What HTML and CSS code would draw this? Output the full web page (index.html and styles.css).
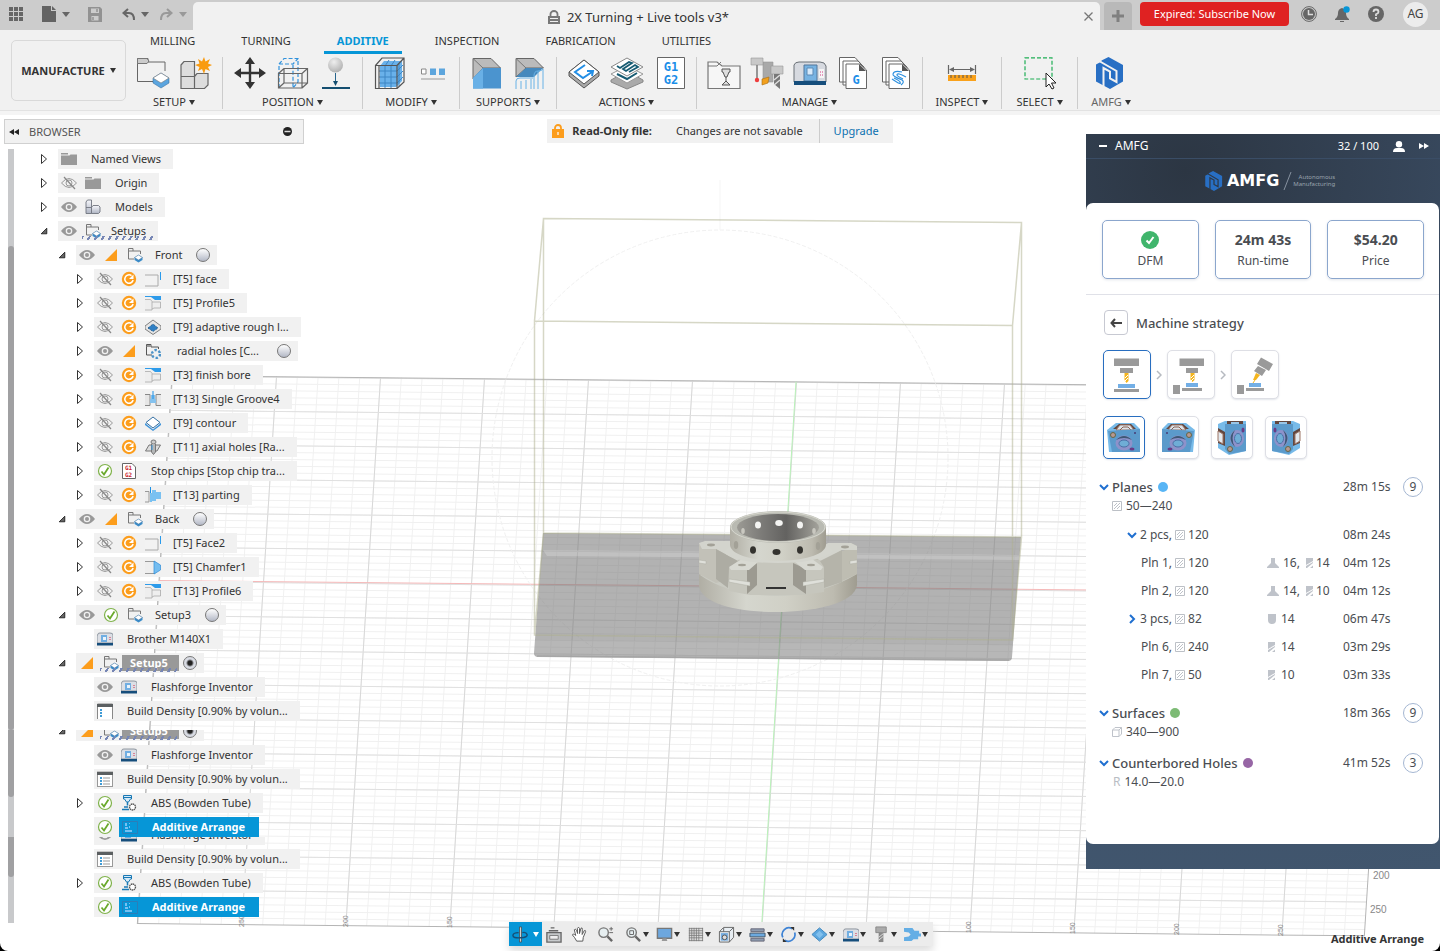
FILE: index.html
```html
<!DOCTYPE html>
<html lang="en">
<head>
<meta charset="utf-8">
<meta name="viewport" content="width=device-width, initial-scale=1">
<title>2X Turning + Live tools v3*</title>
<link rel="stylesheet" href="styles.css">
</head>
<body>
<svg class="defs" width="0" height="0" aria-hidden="true">
<defs>
<linearGradient id="gSteel" x1="0" y1="0" x2="0" y2="1"><stop offset="0" stop-color="#f6f7fb"/><stop offset="1" stop-color="#aeb4c3"/></linearGradient>
<radialGradient id="gBall" cx=".4" cy=".3" r=".8"><stop offset="0" stop-color="#eee"/><stop offset="1" stop-color="#aaa"/></radialGradient>
<linearGradient id="gSide"><stop offset="0" stop-color="#b0aea4"/><stop offset=".3" stop-color="#d5d6ce"/><stop offset=".55" stop-color="#d0d0c6"/><stop offset=".85" stop-color="#bdbbb0"/><stop offset="1" stop-color="#9f9c90"/></linearGradient>
<linearGradient id="gHole"><stop offset="0" stop-color="#9c9b95"/><stop offset=".3" stop-color="#7c7b78"/><stop offset=".6" stop-color="#636260"/><stop offset="1" stop-color="#a3a29b"/></linearGradient>
</defs>
<symbol id="closed" viewBox="0 0 8 12"><path d="M1.5 1.5 6.500 6 1.500 10.500Z" fill="#fff" stroke="#333"/></symbol>
<symbol id="open" viewBox="0 0 10 10"><path d="M8.500 1.500V8.500H1.500Z" fill="#666" stroke="#111"/></symbol>
<symbol id="eye" viewBox="0 0 16 16"><path d="M0 8Q8-2 16 8 8 18 0 8Z" fill="#999"/><circle cx="8" cy="8" r="3.300" fill="#f1f1f1"/><circle cx="8" cy="8" r="2" fill="#999"/></symbol>
<symbol id="eyeoff" viewBox="0 0 16 16"><path d="M.5 8Q8-1 15.500 8 8 17 .5 8Z" fill="none" stroke="#999"/><circle cx="8" cy="8" r="3" fill="none" stroke="#999"/><path d="M3 2 14 14" stroke="#888" stroke-width="1.200"/></symbol>
<symbol id="folder" viewBox="0 0 16 16"><path d="M0 2H7V3.500H0ZM0 4.500H8.500L9.500 3.500H16V14H0Z" fill="#999"/></symbol>
<symbol id="models" viewBox="0 0 16 16"><path d="M1 3 2.500 1H6.500V14.500H1Z" fill="url(#gSteel)" stroke="#70757f" stroke-width=".9"/><path d="M6.500 8.500 8 6.500H13.500L15 8V13L13.500 14.500H6.500ZM1 8.500H6.500" fill="url(#gSteel)" stroke="#70757f" stroke-width=".9"/></symbol>
<symbol id="setup" viewBox="0 0 16 16"><path d="M7 12H1.500V1.500H6V4H13.500V7" fill="none" stroke="#777"/><path d="M1.500 4H6" stroke="#777"/><path d="M7.500 10.500 11.500 8 15.500 10.500V13L11.500 15.500 7.500 13Z" fill="#3b8cc9"/><path d="M7.500 10.500 11.500 8 15.500 10.500 11.500 13Z" fill="#fff" stroke="#3e6f99" stroke-width=".5"/></symbol>
<symbol id="pattern" viewBox="0 0 16 16"><path d="M7 12H1.500V1.500H6V4H13.500V6" fill="none" stroke="#555"/><path d="M1.500 4H6V2H2Z" fill="#999"/><circle cx="11" cy="11" r="4" fill="none" stroke="#4b92c8" stroke-width="2.400" stroke-dasharray="2.400 1.800"/></symbol>
<symbol id="warn" viewBox="0 0 16 16"><path d="M14 2V14H2Z" fill="#fc9d1c"/></symbol>
<symbol id="regen" viewBox="0 0 16 16"><circle cx="8" cy="8" r="7.200" fill="#fc9d1c"/><path d="M10.500 4.700A4.200 4.200 0 1 0 12.100 9" fill="none" stroke="#fff" stroke-width="1.500"/><path d="M8 8H12.500V3.500Z" fill="#fff"/></symbol>
<symbol id="ok" viewBox="0 0 16 16"><circle cx="8" cy="8" r="6.500" fill="#fff" stroke="#7fb24a" stroke-width="1.200"/><path d="M4.500 8.500 7 11.500 11.500 4.500" fill="none" stroke="#6aaa2c" stroke-width="1.800"/></symbol>
<symbol id="face" viewBox="0 0 16 16"><path d="M0 4H13V15H0" fill="#f2f2f2" stroke="#aaa"/><path d="M15.500 1V9" stroke="#2a9bec"/></symbol>
<symbol id="profile" viewBox="0 0 16 16"><path d="M0 1H16V5H10L6 2H0Z" fill="#2e9bea"/><path d="M0 4.500H5.500L7 6.500V15H0M7 7H15.500V13H9L7 14" fill="#eee" stroke="#aaa" stroke-width=".8"/></symbol>
<symbol id="chamfer" viewBox="0 0 16 16"><path d="M0 2.500H10V14.500H0" fill="#eee" stroke="#999"/><path d="M9 2 15.500 6V11L9 15Z" fill="#74bdf0" stroke="#2e8dd8" stroke-width=".7"/></symbol>
<symbol id="adapt" viewBox="0 0 16 16"><path d="M0 7 8 1 16 7V10L8 15.500 0 10Z" fill="#e5e5e5" stroke="#666" stroke-width=".8"/><path d="M3 9 8 5 13 9 8 12.500Z" fill="#2f7fc4" stroke="#1c4e7c" stroke-dasharray="1 1"/></symbol>
<symbol id="groove" viewBox="0 0 16 16"><path d="M0 3.500H5V14.500H0M16 3.500H11V14.500H16" fill="#e6e6e6" stroke="#888"/><path d="M6 4V8H5V12H11V8H10V4Z" fill="#85c2ee"/><path d="M8 0V8" stroke="#1d90e6"/></symbol>
<symbol id="contour" viewBox="0 0 16 16"><path d="M0 8 8 14.500 16 8V10L8 16 0 10Z" fill="#3d93da"/><path d="M1 7.500 8 2 15 7.500 8 13Z" fill="#fff" stroke="#3470a4"/></symbol>
<symbol id="drill" viewBox="0 0 16 16"><path d="M.5 12 4 6H15.500L12 12Z" fill="#ddd" stroke="#777"/><ellipse cx="8.500" cy="3" rx="2.500" ry="2" fill="#ccc" stroke="#777"/><path d="M6.500 5V13L8.500 15.500 10.500 13V5" fill="#b5b7b8" stroke="#777"/><path d="M7 11V6" stroke="#3a99df"/></symbol>
<symbol id="parting" viewBox="0 0 16 16"><path d="M0 4.500H4V15H0" fill="#eee" stroke="#999"/><path d="M5.500 0V6" stroke="#1d90e6"/><path d="M5 6H7V3H11V5H16V12H11V14H7V15H5Z" fill="#7ac1f1"/></symbol>
<symbol id="machine" viewBox="0 0 16 16"><path d="M1 3Q1 2 3 2H13Q16 2 16 4V12H0V5Z" fill="#dcdfe5" stroke="#687280" stroke-width=".7"/><path d="M4 4H10V11H4Z" fill="#70aee2"/><path d="M6 6H9V9H6Z" fill="#eaf3fb"/><path d="M0 12H16V14.500H0Z" fill="#164e7c"/><path d="M13 6V10" stroke="#d7264a" stroke-dasharray="1 1"/></symbol>
<symbol id="density" viewBox="0 0 16 16"><rect x=".5" y="1" width="15" height="14.500" fill="#fff" stroke="#999"/><path d="M0 1H16V4H0Z" fill="#5b5f61"/><path d="M3 7H5M3 10H5M3 13H5" stroke="#007bc8" stroke-width="1.500"/><path d="M6 7H13M6 10H13M6 13H13" stroke="#999"/></symbol>
<symbol id="density2" viewBox="0 0 16 16"><path d="M.5 16V1H15.500V16" fill="#fff" stroke="#888"/><path d="M0 1H16V4H0Z" fill="#5b5f61"/><path d="M3 7H5M3 10H5M3 13H5" stroke="#007bc8" stroke-width="1.500"/></symbol>
<symbol id="filament" viewBox="0 0 16 16"><path d="M2.500 .5H10.500V4H9.500L7.500 7H5.500L3.500 4H2.500Z" fill="#d6ebf8" stroke="#1878b5"/><path d="M3 2.500H10" stroke="#1878b5"/><path d="M6.500 7V10.500M3 12H7M1 14.500H8" fill="none" stroke="#1878b5" stroke-width="1.500"/><circle cx="11.500" cy="12" r="3" fill="#fff" stroke="#555" stroke-width="1.300" stroke-dasharray="1.500 .5"/></symbol>
<symbol id="arrange" viewBox="0 0 16 16"><path d="M.5 2.500H15.500V14.500H.5Z" fill="none" stroke="#2b7db8"/><path d="M3 4H5V7H3ZM3 8H6V10H3ZM3 11H10V13H3ZM7 4H8V5H7ZM7 7H8V9H7Z" fill="#75c1f2"/></symbol>
<symbol id="logo" viewBox="0 0 28 32"><path d="M12.500 0 27 8V24.500L14 32 0 24.500V7.500L5.500 4.500V3.500Z" fill="#286fc4"/><path d="M4 4.500 20.500 14V25L14 21.500V14.500L7.500 11V29" fill="none" stroke="var(--gap, #f1f1f1)" stroke-width="2"/></symbol>
<symbol id="hatch" viewBox="0 0 10 10"><path d="M.5.5H9.500V9.500H.5Z" fill="none" stroke="#bcc0c6"/><path d="M2 5 5 2M2 8 8 2M5 8 8 5" stroke="#b5bac2" stroke-width=".9"/></symbol>
<symbol id="mill" viewBox="0 0 12 10"><path d="M4 0H8V5L12 9V10H0V9L4 5Z" fill="#bfc3ca"/></symbol>
<symbol id="endmill" viewBox="0 0 8 10"><path d="M0 0H7V3L0 7ZM0 8 7 4V5L1 10H0ZM4 10 7 7.500V10Z" fill="#bfc3ca"/></symbol>
<symbol id="ball" viewBox="0 0 8 10"><path d="M0 0H8V6A4 4 0 0 1 0 6Z" fill="#bfc3ca"/></symbol>
<symbol id="down" viewBox="0 0 10 10"><path d="M1 3 5 7 9 3" fill="none" stroke="#1f6fd0" stroke-width="2"/></symbol>
<symbol id="right" viewBox="0 0 10 10"><path d="M3 1 7 5 3 9" fill="none" stroke="#1f6fd0" stroke-width="2"/></symbol>
<symbol id="block" viewBox="0 0 34 30"><path d="M0 7 9 0H27L33 6V29H2Z" fill="#78bbe9"/><path d="M6 6 12 1H24L29 6Z" fill="#62473f"/><path d="M9 7 13 2H23L27 7Z" fill="#dce4ea" stroke="#9c7465"/><path d="M13 7 16 4H21L24 7" fill="none" stroke="#8a6252"/><path d="M1 8 33 6V29H5Z" fill="#5b9acb"/><ellipse cx="17" cy="20" rx="8.500" ry="7.500" fill="#8d92ca"/><path d="M9 17Q17 9 25 17 17 13 9 17" fill="#3e5876"/><ellipse cx="17" cy="20.500" rx="5" ry="3.500" fill="#6fadd6" stroke="#4b70a6"/><circle cx="6" cy="12" r="2.500" fill="#b89890" stroke="#664"/><ellipse cx="25" cy="26" rx="2.500" ry="1.500" fill="#6a3a86"/><circle cx="28" cy="10" r="1" fill="#463c75"/></symbol>
<symbol id="blockside" viewBox="0 0 30 34"><path d="M1 3 8 0H29V30L12 34 1 27Z" fill="#78bbe9"/><path d="M10 0H26V4H10Z" fill="#62473f"/><path d="M14 1H22V4H14Z" fill="#9ac6e6"/><path d="M1 7 8 11V25L1 22Z" fill="#62473f"/><path d="M1 10 6 13V23L1 20Z" fill="#e4e9ee" stroke="#9c7465"/><path d="M8 3H29V30L12 33 8 28Z" fill="#5b9acb"/><ellipse cx="20" cy="17.500" rx="7" ry="8.500" fill="#8d92ca"/><path d="M18 9Q9 17 18 26 13 17 18 9" fill="#3e5876"/><ellipse cx="21" cy="17.500" rx="3.500" ry="5" fill="#6fadd6" stroke="#4b70a6"/><circle cx="13" cy="28" r="2.500" fill="#b89890" stroke="#664"/><ellipse cx="26" cy="9" rx="1.500" ry="2.500" fill="#6a3a86"/></symbol>
</svg>

<header>
<div class="titlebar">
<div class="quick">
<button class="ib" aria-label="Data panel"><svg width="14" height="14" viewBox="0 0 14 14"><path d="M0 0H4V4H0ZM5 0H9V4H5ZM10 0H14V4H10ZM0 5H4V9H0ZM5 5H9V9H5ZM10 5H14V9H10ZM0 10H4V14H0ZM5 10H9V14H5ZM10 10H14V14H10Z" fill="#666"/></svg></button>
<button class="ib new" aria-label="New file"><svg width="14" height="16" viewBox="0 0 14 16"><path d="M0 0H9V5H14V16H0ZM10 0 14 4H10Z" fill="#636363"/></svg><i class="car"></i></button>
<button class="ib save" aria-label="Save"><svg width="14" height="15" viewBox="0 0 14 15"><path d="M0 0H12L14 2V15H0Z" fill="#929292"/><path d="M3 1.500H11V6H3ZM3.500 9H10.500V13.500H3.500Z" fill="#ccc"/><path d="M9 2V5M5 10V13" stroke="#929292" stroke-width="1.500"/></svg></button>
<button class="ib undo" aria-label="Undo"><svg width="13" height="13" viewBox="0 0 13 13"><path d="M6 1 1.500 5 6 9M2 5H7Q12 5 12 12" fill="none" stroke="#666" stroke-width="2"/></svg><i class="car"></i></button>
<button class="ib dim" aria-label="Redo"><svg width="13" height="13" viewBox="0 0 13 13"><path d="M7 1 11.500 5 7 9M11 5H6Q1 5 1 12" fill="none" stroke="#999" stroke-width="2"/></svg><i class="car"></i></button>
</div>
<div class="doc"><span class="doc-name"><svg width="12" height="14" viewBox="0 0 12 14"><path d="M2.500 7V4A3.500 3 0 0 1 9.500 4V7" fill="none" stroke="#777" stroke-width="1.800"/><path d="M0 6H12V14H0Z" fill="#777"/><path d="M2 8.500H10M2 11.500H10" stroke="#eee"/></svg>2X Turning + Live tools v3*</span>
<button class="ib" aria-label="Close"><svg width="9" height="9" viewBox="0 0 9 9"><path d="M.5.5 8.500 8.500M8.500.5.5 8.500" stroke="#777" stroke-width="1.300"/></svg></button></div>
<button class="plus" aria-label="New tab"><svg width="12" height="12" viewBox="0 0 12 12"><path d="M6 0V12M0 6H12" stroke="#808080" stroke-width="3"/></svg></button>
<button class="subscribe">Expired: Subscribe Now</button>
<div class="status">
<button class="ib" aria-label="Job status"><svg width="16" height="16" viewBox="0 0 16 16"><circle cx="8" cy="8" r="7.400" fill="none" stroke="#666"/><circle cx="8" cy="8" r="6" fill="#666"/><path d="M7.500 4V8.500H12" fill="none" stroke="#ddd" stroke-width="1.500"/></svg></button>
<button class="ib" aria-label="Notifications"><svg width="15" height="17" viewBox="0 0 15 17"><path d="M0 13Q3 11 3 7 3 3 7 2 11 3 11 7 11 11 14 13V14H0Z" fill="#666"/><path d="M5 15H9V16H5Z" fill="#666"/><circle cx="11.500" cy="3.500" r="3.200" fill="#0696d7"/></svg></button>
<button class="ib" aria-label="Help"><svg width="16" height="16" viewBox="0 0 16 16"><circle cx="8" cy="8" r="8" fill="#666"/><path d="M5.500 6Q5.500 3.500 8 3.500T10.500 6Q10.500 7.200 8 8.300V10M8 11V13" fill="none" stroke="#ddd" stroke-width="1.800"/></svg></button>
<button class="avatar">AG</button>
</div>
</div>
<div class="ribbon">
<button class="workspace">MANUFACTURE<i class="car"></i></button>
<div class="ribbon-main">
<nav class="tabs"><button>MILLING</button><button>TURNING</button><button class="on">ADDITIVE</button><button>INSPECTION</button><button>FABRICATION</button><button>UTILITIES</button></nav>
<div class="groups">
<section class="g96"><div class="tools">
<button aria-label="New setup"><svg viewBox="0 0 32 32"><path d="M17 24.500H.5V1.500H11V5H28V14" fill="none" stroke="#666"/><path d="M.5 1.500H10L12 4 10 6.500H.5Z" fill="#ccc" stroke="#777"/><path d="M16 21 24 16 32 21V26L24 31 16 26Z" fill="#5ba5df" stroke="#2e6796" stroke-width=".5"/><path d="M16 21 24 16 32 21 24 26Z" fill="#fff" stroke="#777" stroke-width=".6"/></svg></button>
<button aria-label="Create from model"><svg viewBox="0 0 32 32"><path d="M1 8 4 4.500H14.500V19.500H1ZM1 19.500H14.500V31.500H1ZM14.500 19.500 17 16.500H28V28L24.500 31.500H14.500Z" fill="#ddd" stroke="#666" stroke-width="1.200"/><path d="M24 0 25.500 4.500 30 2 28 6.500 32 8 28 10 30 14 25.500 12 24 17 22 12 18 14 19.500 10 15 8 19.500 6.500 18 2 22 4.500Z" fill="#f99b10"/></svg></button></div><button class="glabel">SETUP<i class="car"></i></button></section>
<section class="g140"><div class="tools">
<button aria-label="Move"><svg viewBox="0 0 32 32"><path d="M16 4V28M4 16H28" stroke="#333" stroke-width="2.400"/><path d="M16 0 21 7H11ZM16 32 21 25H11ZM0 16 7 11V21ZM32 16 25 11V21Z" fill="#333"/></svg></button>
<button aria-label="Minimize height"><svg viewBox="0 0 32 32"><path d="M2 31V7L7 1.500H21V25L16 31V7M2 7H16L21 1.500" fill="none" stroke="#3192dc" stroke-width="1.200" stroke-dasharray="4 2"/><path d="M1.500 16.500H25V31H1.500ZM7 11.500H30.500V26H7ZM1.500 16.500 7 11.500M25 16.500 30.500 11.500M25 31 30.500 26M1.500 31 7 26" fill="none" stroke="#666" stroke-width="1.200"/></svg></button>
<button aria-label="Place on platform"><svg viewBox="0 0 32 32"><circle cx="15.500" cy="8" r="7.500" fill="url(#gBall)"/><path d="M15.500 16V27" stroke="#26648c"/><path d="M13 24H18L15.500 29Z" fill="#144e70"/><path d="M2 31H30" stroke="#144e70" stroke-width="2"/></svg></button></div><button class="glabel">POSITION<i class="car"></i></button></section>
<section class="g97"><div class="tools">
<button aria-label="Infill"><svg viewBox="0 0 32 32"><path d="M6 9 10 4H28V24L22 30H6Z" fill="#69b1ea"/><path d="M5 14H23L29 8M5 20H23L29 14M5 26H23L29 20M11 31V9L15 3M17 31V9L21 3M25 7V29" fill="none" stroke="#3f86c4"/><path d="M1.500 8.500H23V31.500H1.500ZM1.500 8.500 8 1H30V25L23 31.500M23 8.500 30 1M5 9V31" fill="none" stroke="#555" stroke-width="1.200"/></svg></button>
<button aria-label="Arrange in line"><svg viewBox="0 0 32 32"><path d="M4.500 12H9V17H4.500Z" fill="#fff" stroke="#888"/><path d="M13 11.500H19V18H13ZM22 11.500H28V18H22Z" fill="#5ca5dd"/><path d="M4 22H28" stroke="#999"/></svg></button></div><button class="glabel">MODIFY<i class="car"></i></button></section>
<section class="g97"><div class="tools">
<button aria-label="Solid volume support"><svg viewBox="0 0 32 32"><path d="M2 1.500H20L29.500 11H12L2 22Z" fill="#bbb" stroke="#666"/><path d="M12 11 2 1.500" stroke="#777"/><path d="M12 11H30V31.500H2V21Z" fill="#4b94cf"/><path d="M12 11V31.500H2V21Z" fill="#69b0e6"/></svg></button>
<button aria-label="Bar support"><svg viewBox="0 0 32 32"><path d="M2 1.500H20L29.500 11H12L2 20Z" fill="#bbb" stroke="#666"/><path d="M2 1.500 12 11" stroke="#777"/><path d="M2 20 12 11H29L20 20Z" fill="#4689bd"/><path d="M2 32V24Q2 21 6 21H19M7 32V24M12 32V23M17 32V22M20 32V19Q20 14 24 14T29 12V32M24 32V14" fill="none" stroke="#69b2e6"/></svg></button></div><button class="glabel">SUPPORTS<i class="car"></i></button></section>
<section class="g140"><div class="tools">
<button aria-label="Generate"><svg viewBox="0 0 32 32"><path d="M1 15 16 3 31 15V19L16 31 1 19Z" fill="#aaa" stroke="#555"/><path d="M1 15 16 3 31 15 16 27Z" fill="#fff" stroke="#555"/><path d="M17 8 7 15 15 21 24 15M19 14 25 14 24 19" fill="none" stroke="#238ee5" stroke-width="2"/></svg></button>
<button aria-label="Simulate"><svg viewBox="0 0 32 32"><path d="M0 23 16 14 32 23V25L16 32 0 25Z" fill="#aaa" stroke="#888"/><path d="M0 17 16 9 32 17 16 26Z" fill="#fff" stroke="#999"/><path d="M6 17 16 22 26 16" fill="none" stroke="#175b72" stroke-width="2"/><path d="M0 10 16 1 32 10 16 19Z" fill="#fff" stroke="#888"/><path d="M6 9 9 11 18 5 21 6 12 12 15 14 24 8 27 10 18 15" stroke="#175b72" stroke-width="1.800" fill="none"/></svg></button>
<button aria-label="Post process"><svg viewBox="0 0 32 32"><path d="M3.500.5H30.500V31.500H3.500Z" fill="#fff" stroke="#666"/><text x="17" y="14" text-anchor="middle" class="gtext">G1</text><text x="17" y="27" text-anchor="middle" class="gtext">G2</text></svg></button></div><button class="glabel">ACTIONS<i class="car"></i></button></section>
<section class="g226"><div class="tools">
<button aria-label="Task manager"><svg viewBox="0 0 32 32"><path d="M0 31.500V5H9L14 9H32V31.500Z" fill="#f6f6f6" stroke="#777" stroke-width="1.200"/><path d="M0 9H9L13 5" fill="none" stroke="#777"/><path d="M14 12H22V15H21L19 20H17L15 15H14ZM18 20V24M14 28H22L18 24Z" fill="#ddd" stroke="#555"/></svg></button>
<button aria-label="Tool library"><svg viewBox="0 0 32 32"><path d="M12 5H22V25H12Z" fill="#a9a9a9" stroke="#999" stroke-width=".6"/><path d="M0 1H12V8H0ZM20 9H32V17H20Z" fill="#c8c8c8" stroke="#999" stroke-width=".6"/><path d="M6 8V22" stroke="#777" stroke-width="1.500"/><circle cx="6" cy="23" r="2.200" fill="#ee3e3e"/><path d="M11 22 18 20 17 26 11 28Z" fill="#f2a01d" stroke="#a96d10" stroke-width=".6"/><path d="M23 17H29V32L23 27Z" fill="#777"/><path d="M23 23 29 18M23 28 29 23" stroke="#ddd" stroke-width="1.500"/></svg></button>
<button aria-label="Machine library"><svg viewBox="0 0 32 32"><path d="M0 8Q1 5 5 5H26Q31 5 32 9V25H0Z" fill="#d7dae0" stroke="#6a7076"/><path d="M10 8H23V24H10Z" fill="#77b3e2" stroke="#53769a"/><path d="M13 11H19V18H13Z" fill="#d8eafa" stroke="#5d8ab5"/><path d="M0 24H32V28H0Z" fill="#164e7c"/><path d="M25 12H30V21H25Z" fill="#f5f5f5"/><path d="M26 15H29M26 18H29" stroke="#d33b84" stroke-dasharray="1 1"/></svg></button>
<button aria-label="NC programs"><svg viewBox="0 0 32 32"><path d="M2.500.5H18L24 7V25H2.500ZM6 4H21L27 10V28H6Z" fill="#fff" stroke="#666"/><path d="M9 7H23L29.500 13V31.500H9Z" fill="#fff" stroke="#666"/><path d="M22 7V14H29Z" fill="#555"/><text x="19" y="27" text-anchor="middle" class="gtext">G</text></svg></button>
<button aria-label="Template library"><svg viewBox="0 0 32 32"><path d="M2.500.5H18L24 7V25H2.500ZM6 4H21L27 10V28H6Z" fill="#fff" stroke="#666"/><path d="M9 7H23L29.500 13V31.500H9Z" fill="#fff" stroke="#666"/><path d="M22 7V14H29Z" fill="#555"/><path d="M22 15Q14 13 13 17 12 19 22 23 25 25 21 28M26 20Q17 15 17 18 17 19 23 22M12 22Q22 29 20 25 20 24 14 21" fill="none" stroke="#2e90df" stroke-width="1.200"/></svg></button></div><button class="glabel">MANAGE<i class="car"></i></button></section>
<section class="g79"><div class="tools"><button aria-label="Measure"><svg viewBox="0 0 32 32"><path d="M2.500 8V17M29.500 8V17M4 12.500H28" stroke="#666" stroke-width="1.200"/><path d="M3 12.500 8 10V15ZM29 12.500 24 10V15Z" fill="#666"/><path d="M2 18H30V24H2Z" fill="#f9a11b"/><path d="M5 18V21M9 18V21M13 18V21M17 18V21M21 18V21M25 18V21" stroke="#555"/></svg></button></div><button class="glabel">INSPECT<i class="car"></i></button></section>
<section class="g76"><div class="tools"><button aria-label="Select"><svg viewBox="0 0 32 32"><path d="M1 .8H28V22H1Z" fill="none" stroke="#1fae55" stroke-width="1.200" stroke-dasharray="4 2"/><path d="M22 16V30L25 27 28 32 30 31 27.500 26H32Z" fill="#fff" stroke="#222"/></svg></button></div><button class="glabel">SELECT<i class="car"></i></button></section>
<section class="g66"><div class="tools"><button aria-label="AMFG"><svg viewBox="0 0 32 32"><use href="#logo" x="1" width="28" height="32"/></svg></button></div><button class="glabel soft">AMFG<i class="car"></i></button></section>
</div></div></div>
</header>

<main>
<svg class="canvas" viewBox="0 115 1440 836" preserveAspectRatio="xMidYMin slice" aria-hidden="true">
<g transform="matrix(1 .01 -.0632 1 796 381.800)" fill="none">
<path d="M-624 274H603" stroke="#f1f1f1" stroke-width="548" stroke-dasharray="1 19.800"/>
<path d="M-10 0V548" stroke="#f0f0f0" stroke-width="1227" stroke-dasharray="1 5.850"/>
<path d="M-624 274H603" stroke="#d8d8d8" stroke-width="548" stroke-dasharray="1 103"/>
<path d="M-10 0V548" stroke="#e0e0e0" stroke-width="1227" stroke-dasharray="1 33.250"/>
<path d="M-624 0H603V548H-624Z" stroke="#b5b5b5"/>
<path d="M-624 205H603" stroke="#f5b9b9"/>
<path d="M0 0V548" stroke="#b9f2b9"/>
</g>
<circle cx="720" cy="458" r="228" fill="none" stroke="#f0f0f0" stroke-dasharray="4 2"/>
<path d="M720 180V230" stroke="#f5f5f5"/>
<path d="M543 533 1021 537 1012 657Q1012 661 1008 661L538 657Q534 657 534 653Z" fill="#777" fill-opacity=".57"/>
<path d="M543 550 1020 555V560L547 556Z" fill="#fff" opacity=".2"/>
<path d="M534 640 1012 645V657L1008 661 538 657 534 653Z" fill="#fff" opacity=".07"/>
<path d="M537 656 1009 660" stroke="#a5a5a5" stroke-width="1.500"/>
<path d="M543.500 218.500 1021.500 222.500V537L543.500 533ZM534.500 321 1012.500 325.500V640L534.500 635ZM543.500 218.500 534.500 321M1021.500 222.500 1012.500 325.500M543.500 533 534.500 635M1021.500 537 1012.500 640" fill="none" stroke="#aeb08e" stroke-width="1.500" opacity=".5"/>
<g>
<path d="M699 575Q778 530 857 573V585C855 603 815 612 776 612 732 612 701 602 699 586Z" fill="url(#gSide)"/>
<path d="M700 575Q778 545 857 574 820 596 776 596 728 595 700 575Z" fill="#c9cac2"/>
<path d="M699 543 730 541 745 552V575L716 583 699 574Z" fill="#c2c1b8"/>
<path d="M699 543 705 541H730L745 555 737 561 716 549H702Z" fill="#d3d4cd"/>
<path d="M857 546 851 543H828L812 555 822 562 842 550H857V574L838 583 815 575V560" fill="#bebdb2"/>
<path d="M857 546 851 543H828L812 555 822 562 842 550H857Z" fill="#d3d4cd"/>
<path d="M729 568 740 560H758L820 560 824 567V592L803 595H750L729 591Z" fill="#c6c6bd"/>
<path d="M716 549V579L728 588 729 568 738 561Z" fill="#adaca3"/><path d="M842 550V582L824 588V567L820 561Z" fill="#b5b4aa"/>
<path d="M757 563V585L747 594V570ZM793 563V585L806 594V569Z" fill="#9c9a91"/>
<path d="M729 567 742 559 758 562 749 570H731ZM823 567 812 559 795 562 805 570H821Z" fill="#d8d9d2"/>
<path d="M729 579 750 582V586L729 582ZM824 579 803 582V586L824 582ZM699 560 706 561V564L699 563ZM857 560 850 561V564L857 563Z" fill="#dfe0da" stroke="#a9a89f" stroke-width=".4"/>
<path d="M766 588H786" stroke="#333" stroke-width="2"/>
<path d="M724 552Q732 563 778 563 820 563 833 551L826 544H732Z" fill="#d4d5ce"/>
<path d="M730 527V545C732 566 824 566 826 545V527Z" fill="url(#gSide)"/>
<ellipse cx="778" cy="527" rx="48" ry="16" fill="#b9bab2"/>
<ellipse cx="778" cy="527" rx="47" ry="15" fill="none" stroke="#d6d6cd"/>
<ellipse cx="778" cy="527.500" rx="41" ry="13.500" fill="url(#gHole)"/>
<g fill="#f4f4f2"><ellipse cx="758" cy="525" rx="3" ry="3.500"/><ellipse cx="779" cy="523" rx="3.800" ry="3"/><ellipse cx="800" cy="525" rx="3" ry="3.500"/></g>
<g fill="#c9c8c0"><ellipse cx="743" cy="531" rx="1.800" ry="3"/><ellipse cx="814" cy="531" rx="1.800" ry="3"/></g>
<g fill="#34332f"><ellipse cx="753" cy="550" rx="3" ry="3.800"/><ellipse cx="776.500" cy="552" rx="4" ry="3"/><ellipse cx="800" cy="550" rx="3" ry="3.800"/></g>
<g fill="#a3a197"><ellipse cx="736" cy="545" rx="2.200" ry="4"/><ellipse cx="818" cy="546" rx="2.200" ry="4"/><ellipse cx="711" cy="545" rx="4" ry="1.400"/><ellipse cx="845" cy="547" rx="4" ry="1.400"/><ellipse cx="742" cy="565" rx="4" ry="1.200"/><ellipse cx="811" cy="565" rx="4" ry="1.200"/></g>
</g>
<g class="axis"><text x="1373" y="879">200</text><text x="1370" y="913">250</text><text transform="translate(244 927) rotate(-90)">250</text><text transform="translate(348 927) rotate(-90)">200</text><text transform="translate(452 928) rotate(-90)">150</text><text transform="translate(971 933) rotate(-90)">100</text><text transform="translate(1075 934) rotate(-90)">150</text><text transform="translate(1179 935) rotate(-90)">200</text><text transform="translate(1283 936) rotate(-90)">250</text></g>
</svg>

<aside class="browser">
<div class="browser-head"><button class="ib" aria-label="Collapse browser"><svg width="10" height="6" viewBox="0 0 10 6"><path d="M5 0V6L0 3ZM10 0V6L5 3Z" fill="#222"/></svg></button><span>BROWSER</span><button class="ib" aria-label="Hide panel"><svg width="9" height="9" viewBox="0 0 9 9"><circle cx="4.500" cy="4.500" r="4.500" fill="#222"/><path d="M1.500 4.500H7.500" stroke="#ddd" stroke-width="1.500"/></svg></button></div>
<div class="seg seg-a"><div class="rail"><i></i></div><ul>
<li><button class="tw" aria-label="Expand"><svg><use href="#closed"/></svg></button><div class="chip"><svg><use href="#folder"/></svg><span>Named Views</span></div></li>
<li><button class="tw" aria-label="Expand"><svg><use href="#closed"/></svg></button><div class="chip"><svg><use href="#eyeoff"/></svg><svg><use href="#folder"/></svg><span>Origin</span></div></li>
<li><button class="tw" aria-label="Expand"><svg><use href="#closed"/></svg></button><div class="chip"><svg><use href="#eye"/></svg><svg><use href="#models"/></svg><span>Models</span></div></li>
<li><button class="tw" aria-label="Collapse"><svg><use href="#open"/></svg></button><div class="chip hatched"><svg><use href="#eye"/></svg><svg><use href="#setup"/></svg><span>Setups</span></div></li>
<li class="l1"><button class="tw" aria-label="Collapse"><svg><use href="#open"/></svg></button><div class="chip deep"><svg><use href="#eye"/></svg><svg><use href="#warn"/></svg><svg><use href="#setup"/></svg><span>Front</span><input type="radio" name="active" aria-label="Activate Front"></div></li>
<li class="l2"><button class="tw" aria-label="Expand"><svg><use href="#closed"/></svg></button><div class="chip deep"><svg><use href="#eyeoff"/></svg><svg><use href="#regen"/></svg><svg><use href="#face"/></svg><span>[T5] face</span></div></li>
<li class="l2"><button class="tw" aria-label="Expand"><svg><use href="#closed"/></svg></button><div class="chip deep"><svg><use href="#eyeoff"/></svg><svg><use href="#regen"/></svg><svg><use href="#profile"/></svg><span>[T5] Profile5</span></div></li>
<li class="l2"><button class="tw" aria-label="Expand"><svg><use href="#closed"/></svg></button><div class="chip deep"><svg><use href="#eyeoff"/></svg><svg><use href="#regen"/></svg><svg><use href="#adapt"/></svg><span>[T9] adaptive rough l...</span></div></li>
<li class="l2"><button class="tw" aria-label="Expand"><svg><use href="#closed"/></svg></button><div class="chip deep group"><svg><use href="#eye"/></svg><svg><use href="#warn"/></svg><svg><use href="#pattern"/></svg><span>radial holes [C...</span><input type="radio" name="active" aria-label="Activate radial holes"></div></li>
<li class="l2"><button class="tw" aria-label="Expand"><svg><use href="#closed"/></svg></button><div class="chip deep"><svg><use href="#eyeoff"/></svg><svg><use href="#regen"/></svg><svg><use href="#profile"/></svg><span>[T3] finish bore</span></div></li>
<li class="l2"><button class="tw" aria-label="Expand"><svg><use href="#closed"/></svg></button><div class="chip deep"><svg><use href="#eyeoff"/></svg><svg><use href="#regen"/></svg><svg><use href="#groove"/></svg><span>[T13] Single Groove4</span></div></li>
<li class="l2"><button class="tw" aria-label="Expand"><svg><use href="#closed"/></svg></button><div class="chip deep"><svg><use href="#eyeoff"/></svg><svg><use href="#regen"/></svg><svg><use href="#contour"/></svg><span>[T9] contour</span></div></li>
<li class="l2"><button class="tw" aria-label="Expand"><svg><use href="#closed"/></svg></button><div class="chip deep"><svg><use href="#eyeoff"/></svg><svg><use href="#regen"/></svg><svg><use href="#drill"/></svg><span>[T11] axial holes [Ra...</span></div></li>
<li class="l2"><button class="tw" aria-label="Expand"><svg><use href="#closed"/></svg></button><div class="chip"><svg><use href="#ok"/></svg><svg viewBox="0 0 16 16"><path d="M1.500 .5H11L14.500 4V15.500H1.500Z" fill="#fff" stroke="#666"/><text x="4" y="7" class="tiny-red">G1</text><text x="4" y="14" class="tiny-red">G2</text></svg><span>Stop chips [Stop chip tra...</span></div></li>
<li class="l2"><button class="tw" aria-label="Expand"><svg><use href="#closed"/></svg></button><div class="chip deep"><svg><use href="#eyeoff"/></svg><svg><use href="#regen"/></svg><svg><use href="#parting"/></svg><span>[T13] parting</span></div></li>
<li class="l1"><button class="tw" aria-label="Collapse"><svg><use href="#open"/></svg></button><div class="chip deep"><svg><use href="#eye"/></svg><svg><use href="#warn"/></svg><svg><use href="#setup"/></svg><span>Back</span><input type="radio" name="active" aria-label="Activate Back"></div></li>
<li class="l2"><button class="tw" aria-label="Expand"><svg><use href="#closed"/></svg></button><div class="chip deep"><svg><use href="#eyeoff"/></svg><svg><use href="#regen"/></svg><svg><use href="#face"/></svg><span>[T5] Face2</span></div></li>
<li class="l2"><button class="tw" aria-label="Expand"><svg><use href="#closed"/></svg></button><div class="chip deep"><svg><use href="#eyeoff"/></svg><svg><use href="#regen"/></svg><svg><use href="#chamfer"/></svg><span>[T5] Chamfer1</span></div></li>
<li class="l2"><button class="tw" aria-label="Expand"><svg><use href="#closed"/></svg></button><div class="chip deep"><svg><use href="#eyeoff"/></svg><svg><use href="#regen"/></svg><svg><use href="#profile"/></svg><span>[T13] Profile6</span></div></li>
<li class="l1"><button class="tw" aria-label="Collapse"><svg><use href="#open"/></svg></button><div class="chip deep"><svg><use href="#eye"/></svg><svg><use href="#ok"/></svg><svg><use href="#setup"/></svg><span>Setup3</span><input type="radio" name="active" aria-label="Activate Setup3"></div></li>
<li class="l2"><i class="tw"></i><div class="chip"><svg><use href="#machine"/></svg><span>Brother M140X1</span></div></li>
<li class="l1"><button class="tw" aria-label="Collapse"><svg><use href="#open"/></svg></button><div class="chip hatched"><svg><use href="#warn"/></svg><svg><use href="#setup"/></svg><span class="current">Setup5</span><input type="radio" name="active" aria-label="Activate Setup5" checked></div></li>
<li class="l2"><i class="tw"></i><div class="chip"><svg><use href="#eye"/></svg><svg><use href="#machine"/></svg><span>Flashforge Inventor</span></div></li>
<li class="l2"><i class="tw"></i><div class="chip"><svg><use href="#density2"/></svg><span>Build Density [0.90% by volun...</span></div></li>
</ul></div>
<div class="seg seg-b"><div class="rail"><i></i></div><ul>
<li class="l1"><button class="tw" aria-label="Collapse"><svg><use href="#open"/></svg></button><div class="chip hatched"><svg><use href="#warn"/></svg><svg><use href="#setup"/></svg><span class="current">Setup5</span><input type="radio" name="active-b" aria-label="Activate Setup5" checked></div></li>
<li class="l2"><i class="tw"></i><div class="chip"><svg><use href="#eye"/></svg><svg><use href="#machine"/></svg><span>Flashforge Inventor</span></div></li>
<li class="l2"><i class="tw"></i><div class="chip"><svg><use href="#density"/></svg><span>Build Density [0.90% by volun...</span></div></li>
<li class="l2"><button class="tw" aria-label="Expand"><svg><use href="#closed"/></svg></button><div class="chip"><svg><use href="#ok"/></svg><svg><use href="#filament"/></svg><span>ABS (Bowden Tube)</span></div></li>
<li class="l2"><i class="tw"></i><div class="chip split"><svg><use href="#ok"/></svg><b><svg><use href="#arrange"/></svg>Additive Arrange</b></div></li>
</ul></div>
<div class="seg seg-c"><div class="rail"><i></i></div><ul>
<li class="l2"><i class="tw"></i><div class="chip"><svg><use href="#eye"/></svg><svg><use href="#machine"/></svg><span>Flashforge Inventor</span></div></li>
<li class="l2"><i class="tw"></i><div class="chip"><svg><use href="#density"/></svg><span>Build Density [0.90% by volun...</span></div></li>
<li class="l2"><button class="tw" aria-label="Expand"><svg><use href="#closed"/></svg></button><div class="chip"><svg><use href="#ok"/></svg><svg><use href="#filament"/></svg><span>ABS (Bowden Tube)</span></div></li>
<li class="l2"><i class="tw"></i><div class="chip split"><svg><use href="#ok"/></svg><b><svg><use href="#arrange"/></svg>Additive Arrange</b></div></li>
</ul></div>
</aside>

<div class="notice"><svg width="12" height="14" viewBox="0 0 12 14"><path d="M3 6V4A3 3 0 0 1 9 4V6" fill="none" stroke="#fc9d1c" stroke-width="1.800"/><path d="M0 5H12V14H0Z" fill="#fc9d1c"/><path d="M6 8V11" stroke="#fff" stroke-width="1.200"/></svg><b>Read-Only file:</b><span>Changes are not savable</span><a href="#">Upgrade</a></div>

<aside class="amfg">
<div class="amfg-bar"><button class="ib" aria-label="Minimize"><svg width="8" height="2"><path d="M0 1H8" stroke="#fff" stroke-width="2"/></svg></button><span>AMFG</span><span class="count">32 / 100</span><button class="ib" aria-label="Account"><svg width="12" height="11" viewBox="0 0 12 11"><circle cx="6" cy="3.200" r="3.200" fill="#fff"/><path d="M0 11Q0 7 4 7H8Q12 7 12 11Z" fill="#fff"/></svg></button><button class="ib" aria-label="Expand panel"><svg width="10" height="6" viewBox="0 0 10 6"><path d="M0 0V6L5 3ZM5 0V6L10 3Z" fill="#fff"/></svg></button></div>
<div class="brand"><svg width="18" height="20"><use href="#logo"/></svg><strong>AMFG</strong><svg width="9" height="20" viewBox="0 0 9 20"><path d="M8 1 1 19" stroke="#8792a0"/></svg><small>Autonomous<br>Manufacturing</small></div>
<div class="card">
<div class="stats"><div><svg width="18" height="18" viewBox="0 0 18 18"><circle cx="9" cy="9" r="9" fill="#40b56c"/><path d="M5.500 9.500 8 12 12.500 6" fill="none" stroke="#fff" stroke-width="2"/></svg><span>DFM</span></div><div><b>24m 43s</b><span>Run-time</span></div><div><b>$54.20</b><span>Price</span></div></div>
<div class="strategy">
<div class="back"><button aria-label="Back"><svg width="12" height="10" viewBox="0 0 12 10"><path d="M5 1 1.500 5 5 9M1.500 5H12" fill="none" stroke="#444" stroke-width="2"/></svg></button><h2>Machine strategy</h2></div>
<div class="machines">
<button class="on" aria-label="3 axis"><svg viewBox="0 0 46 46"><path d="M10 6.500H35V14H10ZM16 16H29V21H16ZM10 37H35V40H10Z" fill="#9a9a9a"/><path d="M20.500 21H24.500V29L22.500 31 20.500 28Z" fill="#f4b51e"/><path d="M21 26 24 23M21 29 24 26" stroke="#fff"/><path d="M14 32H31V36H14Z" fill="#73afe6"/></svg></button>
<svg class="sep" viewBox="0 0 6 10"><path d="M1 1 5 5 1 9" fill="none" stroke="#b6bac0" stroke-width="1.500"/></svg>
<button aria-label="4 axis"><svg viewBox="0 0 46 46"><path d="M11.500 6.500H36V14H11.500ZM18 16H30V21H18ZM5 33H12V42H5ZM14 36H34V39H14Z" fill="#9a9a9a"/><path d="M22.500 21H26.500V28L24.500 30 22.500 28Z" fill="#f4b51e"/><path d="M23 26 26 23M23 29 26 26" stroke="#fff"/><path d="M18 31H30V35H18Z" fill="#73afe6"/></svg></button>
<svg class="sep" viewBox="0 0 6 10"><path d="M1 1 5 5 1 9" fill="none" stroke="#b6bac0" stroke-width="1.500"/></svg>
<button aria-label="5 axis"><svg viewBox="0 0 46 46"><path d="M29 5.500 41 12 37 19 25 12ZM26 14 34 18 30 24 22 19ZM5 33H12V42H5ZM14 36H32V39H14Z" fill="#9a9a9a"/><path d="M24 21 28 23 24 28 21 28Z" fill="#f4b51e"/><path d="M23 28 21 31" stroke="#f4b51e"/><path d="M17 31H29V35H17Z" fill="#73afe6"/></svg></button>
</div>
<div class="parts"><button class="on" aria-label="Orientation 1"><svg><use href="#block"/></svg></button><button aria-label="Orientation 2"><svg class="flip"><use href="#block"/></svg></button><button aria-label="Orientation 3"><svg class="tall"><use href="#blockside"/></svg></button><button aria-label="Orientation 4"><svg class="tall flip"><use href="#blockside"/></svg></button></div>
</div>
<div class="features">
<section><div class="feat"><button class="ib" aria-label="Collapse Planes"><svg><use href="#down"/></svg></button><h3>Planes</h3><i class="dot blue"></i><time>28m 15s</time><span class="badge">9</span></div>
<p><svg><use href="#hatch"/></svg>50—240</p>
<ul class="planes">
<li class="grp"><span><button class="ib" aria-label="Collapse"><svg><use href="#down"/></svg></button>2 pcs,<svg><use href="#hatch"/></svg>120</span><span></span><time>08m 24s</time></li>
<li><span>Pln 1,<svg><use href="#hatch"/></svg>120</span><span><svg class="w12"><use href="#mill"/></svg>16, <svg class="second"><use href="#endmill"/></svg>14</span><time>04m 12s</time></li>
<li><span>Pln 2,<svg><use href="#hatch"/></svg>120</span><span><svg class="w12"><use href="#mill"/></svg>14, <svg class="second"><use href="#endmill"/></svg>10</span><time>04m 12s</time></li>
<li class="grp"><span><button class="ib" aria-label="Expand"><svg><use href="#right"/></svg></button>3 pcs,<svg><use href="#hatch"/></svg>82</span><span><svg><use href="#ball"/></svg>14</span><time>06m 47s</time></li>
<li><span>Pln 6,<svg><use href="#hatch"/></svg>240</span><span><svg><use href="#endmill"/></svg>14</span><time>03m 29s</time></li>
<li><span>Pln 7,<svg><use href="#hatch"/></svg>50</span><span><svg><use href="#endmill"/></svg>10</span><time>03m 33s</time></li>
</ul></section>
<section><div class="feat"><button class="ib" aria-label="Collapse Surfaces"><svg><use href="#down"/></svg></button><h3>Surfaces</h3><i class="dot green"></i><time>18m 36s</time><span class="badge">9</span></div>
<p><svg viewBox="0 0 10 10"><path d="M.5 3H7V9.500H.5ZM.5 3 3 .5H9.500V7L7 9.500M7 3 9.500.5" fill="none" stroke="#bfc3ca"/></svg>340—900</p></section>
<section><div class="feat"><button class="ib" aria-label="Collapse Counterbored Holes"><svg><use href="#down"/></svg></button><h3>Counterbored Holes</h3><i class="dot purple"></i><time>41m 52s</time><span class="badge">3</span></div>
<p><em>R</em>14.0—20.0</p></section>
</div></div>
</aside>

<div class="navbar">
<button class="on" aria-label="Orbit"><svg viewBox="0 0 18 18"><path d="M8 1H10V17H8Z" fill="#ddd" stroke="#444" stroke-width=".8"/><path d="M7 7Q1 7 1 10T9 12.500 16 9 11 7" fill="none" stroke="#164e75" stroke-width="1.500"/></svg><i class="car"></i></button>
<button class="single" aria-label="Look at"><svg viewBox="0 0 18 18"><path d="M2 7H17V17H2ZM4 5H14M6 2H10" fill="#c8cbcd" stroke="#666" stroke-width="1.400"/><path d="M5 10H14V14H5Z" fill="#eee" stroke="#777"/></svg></button>
<button class="single" aria-label="Pan"><svg viewBox="0 0 18 18"><path d="M6 16Q4 12 1.500 9.500 2 7.500 5 10L3.500 4Q4.500 2 6 5L7 8 6.800 2.500Q8 0 9 2.500V8L10.500 2.500Q12 1 12 3.500L11.800 9 14 5Q15.500 4 15.500 6L13 12 12.500 16Z" fill="#fff" stroke="#555"/></svg></button>
<button class="single" aria-label="Zoom"><svg viewBox="0 0 18 18"><circle cx="7" cy="7" r="5" fill="#e6eef0" stroke="#777" stroke-width="1.500"/><path d="M11 11 16 16" stroke="#666" stroke-width="2.500"/><path d="M13 3H17M15 1V5M13 7H17" stroke="#666"/></svg></button>
<button aria-label="Zoom window"><svg viewBox="0 0 18 18"><circle cx="7" cy="7" r="5" fill="#e6eef0" stroke="#777" stroke-width="1.500"/><path d="M5 5H9V9H5Z" fill="none" stroke="#666"/><path d="M11 11 16 16" stroke="#666" stroke-width="2.500"/></svg><i class="car"></i></button>
<button aria-label="Display settings"><svg viewBox="0 0 18 18"><path d="M1.500 2.500H16.500V13H1.500Z" fill="#6da7de" stroke="#777" stroke-width="1.500"/><path d="M7 13H11L12 16H6Z" fill="#999"/></svg><i class="car"></i></button>
<button aria-label="Grid"><svg viewBox="0 0 18 18"><path d="M2 2H17V16H2Z" fill="#ddd"/><path d="M2 2.500H17M2 5H17M2 7.500H17M2 10H17M2 12.500H17M2 15.500H17M2.500 2V16M5 2V16M7.500 2V16M10 2V16M12.500 2V16M16.500 2V16" stroke="#777" stroke-width=".8"/></svg><i class="car"></i></button>
<button aria-label="Viewports"><svg viewBox="0 0 18 18"><path d="M1.500 6H12V17H1.500ZM1.500 6 6 1.500H16.500V12L12 17M12 6 16.500 1.500M6 2V6" fill="#e8eef3" stroke="#666"/><path d="M3 7.500H10.500V15.500H3Z" fill="#75ace0"/><circle cx="7" cy="12" r="2.500" fill="#ddd" stroke="#555"/></svg><i class="car"></i></button>
<button aria-label="Stock"><svg viewBox="0 0 18 18"><path d="M2 3H16V6H2ZM2 13H16V16H2Z" fill="#8d9cb0" stroke="#667"/><path d="M1 7.500H17V11.500H1Z" fill="#6ba9df" stroke="#456"/></svg><i class="car"></i></button>
<button aria-label="Refresh"><svg viewBox="0 0 18 18"><path d="M3 12A7 7 0 0 1 13 3M15.500 7A7 7 0 0 1 5 15" fill="none" stroke="#3e83d5" stroke-width="1.800"/><path d="M11 1H15V5ZM3 17H7L3 13Z" fill="#333"/></svg><i class="car"></i></button>
<button aria-label="Faces"><svg viewBox="0 0 18 18"><path d="M1 9 9 2 17 9 9 16Z" fill="#5ba6df" stroke="#4187bb"/><path d="M5 9 9 5 13 9 9 13Z" fill="#82c0ed"/></svg><i class="car"></i></button>
<button aria-label="Machine"><svg viewBox="0 0 18 18"><use href="#machine" x="1" y="1" width="17" height="17"/></svg><i class="car"></i></button>
<button aria-label="Tool"><svg viewBox="0 0 18 18"><path d="M3 1H14V7H3Z" fill="#aaa" stroke="#888"/><path d="M6 7H11V17H6Z" fill="#888"/><path d="M6 12 11 8M6 15 11 11" stroke="#ddd"/></svg><i class="car"></i></button>
<button aria-label="Fixture"><svg viewBox="0 0 18 18"><path d="M0 2H9L11 5H16V8H18V11H15V14H10L8 16H0V12L5 11 7 9 5 7 0 6Z" fill="#64aee5"/></svg><i class="car"></i></button>
</div>
<div class="selection">Additive Arrange</div>
</main>
</body>
</html>
```
FILE: styles.css
```css
* { box-sizing: border-box; }
body {
  margin: 0;
  min-height: 100vh;
  display: flex;
  flex-direction: column;
  background: #000;
  color: #333;
  font: 11px/16px "Noto Sans", "Open Sans", sans-serif;
}
button { font: inherit; color: inherit; border: 0; background: none; padding: 0; cursor: pointer; }
ul, p, h2, h3 { margin: 0; padding: 0; list-style: none; }
svg { display: block; flex: none; }
.defs { position: absolute; }
.ib { display: flex; align-items: center; gap: 6px; }
.car {
  display: inline-block;
  flex: none;
  border: 3px solid transparent;
  border-top: 5px solid #333;
  border-bottom: 0;
}

/* title bar */
.titlebar { display: flex; align-items: flex-end; height: 30px; background: #ccc; }
.quick { display: flex; align-items: center; width: 193px; height: 28px; padding: 0 0 4px 9px; flex: none; }
.quick .car { border-width: 5px 4px 0; border-top-color: #666; }
.quick .new { margin-left: 19px; }
.quick .save { margin-left: 18px; }
.quick .undo { margin-left: 20px; margin-right: 11px; }
.quick .dim .car { border-top-color: #999; }
.doc { flex: 1; display: flex; align-items: center; height: 28px; padding-right: 7px; background: #f1f1f1; border-radius: 5px 5px 0 0; }
.doc-name { flex: 1; display: flex; align-items: center; justify-content: center; gap: 7px; font-size: 13px; padding-top: 2px; }
.plus { width: 28px; height: 28px; margin-left: 4px; display: grid; place-items: center; background: #b9b9b9; border-radius: 4px 4px 0 0; }
.subscribe { width: 149px; height: 24px; margin: 0 12px 4px 8px; border-radius: 4px; background: #df2222; color: #fff; }
.status { display: flex; align-items: center; gap: 18px; height: 28px; padding: 0 12px 4px 0; }
.avatar { width: 25px; height: 25px; margin-left: 1px; border-radius: 50%; background: #ececec; font-size: 12px; color: #444; }

/* ribbon */
.ribbon { display: flex; height: 85px; background: #f1f1f1; border-bottom: 4px solid #f4f4f4; box-shadow: inset 0 -1px #e2e2e2; }
.workspace { width: 115px; height: 61px; margin: 10px 0 0 11px; border: 1px solid #d9d9d9; border-radius: 5px; font-weight: 700; display: flex; align-items: center; justify-content: center; gap: 5px; flex: none; white-space: nowrap; }
.ribbon-main { flex: 1; }
.tabs { display: flex; gap: 46px; height: 24px; padding-left: 24px; }
.tabs button { position: relative; height: 24px; padding-bottom: 2px; }
.tabs .on { color: #0696d7; font-weight: 700; }
.tabs .on::after { content: ""; position: absolute; left: -13px; right: -13px; bottom: 0; height: 3px; background: #0696d7; }
.groups { display: flex; margin-top: 3px; }
.groups section { height: 52px; border-right: 1px solid #ccc; display: flex; flex-direction: column; align-items: center; justify-content: space-between; }
.groups section:last-child { border: 0; }
.g96 { width: 97px; } .g140 { width: 140px; } .g97 { width: 97px; } .g226 { width: 226px; }
.g79 { width: 79px; } .g76 { width: 76px; } .g66 { width: 66px; }
.tools { display: flex; gap: 11px; }
.tools svg { width: 32px; height: 32px; overflow: visible; }
.glabel { display: flex; align-items: center; gap: 3px; height: 14px; }
.soft { color: #666; }
.gtext { font: 700 12px "DejaVu Sans Mono", monospace; fill: #1b8ee8; }
.tiny-red { font: 700 6px "DejaVu Sans Mono", monospace; fill: #cb1f2f; }

/* work area */
main { position: relative; flex: 1; display: grid; grid-template-columns: 1fr auto 1fr; align-items: start; min-height: 836px; background: #fff; border-radius: 0 0 8px 8px; overflow: hidden; }
.canvas { position: absolute; inset: 0; width: 100%; height: 100%; }
.axis { font: 10px "Liberation Sans", Arial, sans-serif; fill: #888; }
.axis text[transform] { font-size: 7px; }

/* browser tree */
.browser { position: relative; width: 304px; padding-top: 4px; }
.browser-head { display: flex; align-items: center; height: 25px; margin-left: 4px; padding: 0 11px 0 4px; background: #f1f1f1; border: 1px solid #d0d0d0; color: #555; }
.browser-head span { flex: 1; margin-left: 10px; }
.seg { display: flex; overflow: hidden; padding-left: 8px; }
.seg-a { height: 586px; padding-top: 3px; }
.seg-b { height: 107px; }
.seg-c { height: 86px; }
.seg-b ul { margin-top: -11px; }
.seg-c ul { margin-top: -14px; }
.rail { width: 6px; background: #c8c9cb; margin-right: 26px; flex: none; display: flex; align-items: flex-start; }
.rail i { width: 6px; background: #a0a0a2; border-radius: 0 0 3px 3px; }
.seg-a .rail { margin-top: 2px; }
.seg-a .rail i { height: 484px; margin-top: 97px; border-radius: 3px; }
.seg-b .rail i { height: 67px; }
.seg-c .rail i { height: 40px; }
.seg li { display: flex; align-items: center; height: 24px; }
.l1 { padding-left: 18px; }
.l2 { padding-left: 36px; }
.tw { width: 18px; height: 20px; display: flex; align-items: center; flex: none; }
.tw svg { width: 8px; height: 12px; }
.chip { position: relative; display: flex; align-items: center; gap: 8px; height: 20px; padding: 0 12px 0 3px; background: #f1f1f1; white-space: nowrap; }
.chip svg { width: 16px; height: 16px; }
.chip span { margin-left: 6px; }
.chip.deep span { margin-left: 4px; }
.chip input { appearance: none; width: 14px; height: 14px; margin: 0 -5px 0 6px; border: 1px solid #777; border-radius: 50%; background: linear-gradient(#fff, #b3b8c6); }
.chip input:checked { background: radial-gradient(circle, #222 0 2px, #d8dbe3 4px); margin-left: -4px; }
.chip.group span { margin-left: 8px; }
.chip.group input { margin-left: 10px; }
.hatched::after { content: ""; position: absolute; left: 24px; right: 4px; bottom: 1px; height: 4px; background: repeating-linear-gradient(120deg, #7686b5 0 2px, transparent 2px 6px); }
.chip.hatched span { margin-left: 2px; }
.chip.hatched .current { margin-left: -5px; width: 57px; height: 16px; padding-left: 8px; background: #999; color: #fff; font-weight: 700; }
.hatched:has(.current)::after { right: 27px; }
.split { padding-right: 0; }
.split b { display: flex; align-items: center; gap: 14px; height: 20px; margin-left: -2px; padding: 0 14px 0 3px; background: #0696d7; color: #fff; }

/* read-only notice */
.notice { position: relative; display: flex; align-items: center; height: 24px; margin-top: 4px; padding-left: 5px; background: #f1f1f1; white-space: nowrap; }
.notice b { margin-left: 8px; }
.notice span { margin: 0 16px 0 24px; }
.notice a { line-height: 24px; padding: 0 14px; border-left: 1px solid #ccc; color: #0a70b0; text-decoration: none; }

/* AMFG panel */
.amfg { position: relative; width: 354px; margin-top: 19px; padding-bottom: 25px; justify-self: end; background: radial-gradient(circle at 28% 5%, #2c3643, #3c4f67 50%, #41566e); color: #4a4d52; font-size: 12px; }
.amfg-bar { display: flex; align-items: center; height: 25px; padding: 0 11px 0 13px; color: #fff; font-size: 11px; border-bottom: 1px solid #3a4d66; }
.amfg-bar span { margin-left: 8px; font-size: 12px; }
.amfg-bar .count { margin: 0 14px 0 auto; font-size: 11px; }
.amfg-bar .ib + .ib { margin-left: 14px; }
.brand { --gap: #2e3a49; display: flex; align-items: center; justify-content: center; gap: 4px; height: 44px; padding-left: 14px; color: #fff; }
.brand strong { font: 700 16px/20px "DejaVu Sans", sans-serif; }
.brand small { color: #9aa3ae; font-size: 6px; line-height: 7px; text-align: right; margin-left: -3px; }
.card { height: 641px; margin-right: 1px; border-radius: 7px; background: #fff; }
.stats { display: flex; gap: 16px; padding: 17px 15px 15px 16px; border-bottom: 1px solid #e0e1e8; }
.stats div { flex: 1; height: 59px; display: flex; flex-direction: column; align-items: center; justify-content: center; gap: 4px; border: 1px solid #8ba6cd; border-radius: 5px; box-shadow: 0 1px 3px #e2e5ea; }
.stats b { font-size: 14px; line-height: 18px; }
.strategy { padding: 15px 16px 0 17px; }
.back { display: flex; align-items: center; gap: 8px; padding-left: 1px; }
.back button { width: 24px; height: 25px; display: grid; place-items: center; border: 1px solid #c7c9d2; border-radius: 4px; }
h2, h3 { font-size: 13px; line-height: 18px; font-weight: 500; }
.machines { display: flex; align-items: center; gap: 5px; margin-top: 15px; }
.machines button, .parts button { display: grid; place-items: center; border: 1px solid #dedfe5; border-radius: 5px; background: #fff; box-shadow: 0 1px 2px #e2e5ea; }
.machines button { width: 48px; height: 49px; }
.machines button svg { width: 46px; height: 46px; }
.machines .on, .parts .on { border-color: #286ec0; }
.sep { width: 6px; height: 10px; }
.parts { display: flex; gap: 12px; margin-top: 17px; }
.parts button { width: 42px; height: 43px; }
.parts svg { width: 34px; height: 30px; }
.parts .tall { width: 30px; height: 34px; }
.flip { transform: scaleX(-1); }
.features { padding: 18px 16px 0 13px; }
.features section { margin-bottom: 13px; }
.feat { display: flex; align-items: center; height: 20px; }
.feat .ib svg, .grp .ib svg { width: 10px; height: 10px; }
.feat h3 { margin-left: 3px; }
.dot { width: 10px; height: 10px; margin-left: 5px; border-radius: 50%; }
.blue { background: #58b5f5; } .green { background: #7dbb75; } .purple { background: #9766a5; }
.feat time { margin-left: auto; width: 60px; }
.badge { width: 20px; height: 20px; border: 1px solid #a5b7d2; border-radius: 50%; text-align: center; line-height: 18px; }
.features p { display: flex; align-items: center; gap: 4px; height: 17px; padding-left: 13px; }
.features p svg, .planes svg { width: 10px; height: 10px; }
.features p em { font-style: normal; color: #b9bdc4; margin-left: 1px; }
.planes { padding: 7px 0 1px 28px; }
.planes li { display: grid; grid-template-columns: 140px 76px 1fr; align-items: center; height: 28px; }
.planes li > span { display: flex; align-items: center; gap: 4px; }
.planes li > span:first-child { padding-left: 14px; gap: 3px; }
.planes li.grp > span:first-child { padding-left: 0; }
.planes .w12 { width: 12px; }
.planes .second { width: 8px; margin-left: 2px; margin-right: -2px; }

/* view controls */
.navbar { position: absolute; left: 509px; bottom: 5px; display: flex; height: 24px; padding-right: 3px; background: #ececec; box-shadow: 0 5px 8px #ddd; }
.navbar button { display: flex; align-items: center; gap: 1px; width: 31px; padding-left: 5px; }
.navbar svg { width: 17px; height: 17px; }
.navbar .single { width: 26px; padding-left: 3px; }
.navbar .on { width: 33px; padding-left: 3px; gap: 4px; background: #0696d7; }
.navbar .on .car { border-top-color: #fff; }
.selection { position: absolute; right: 16px; bottom: 4px; font-weight: 700; }
```
